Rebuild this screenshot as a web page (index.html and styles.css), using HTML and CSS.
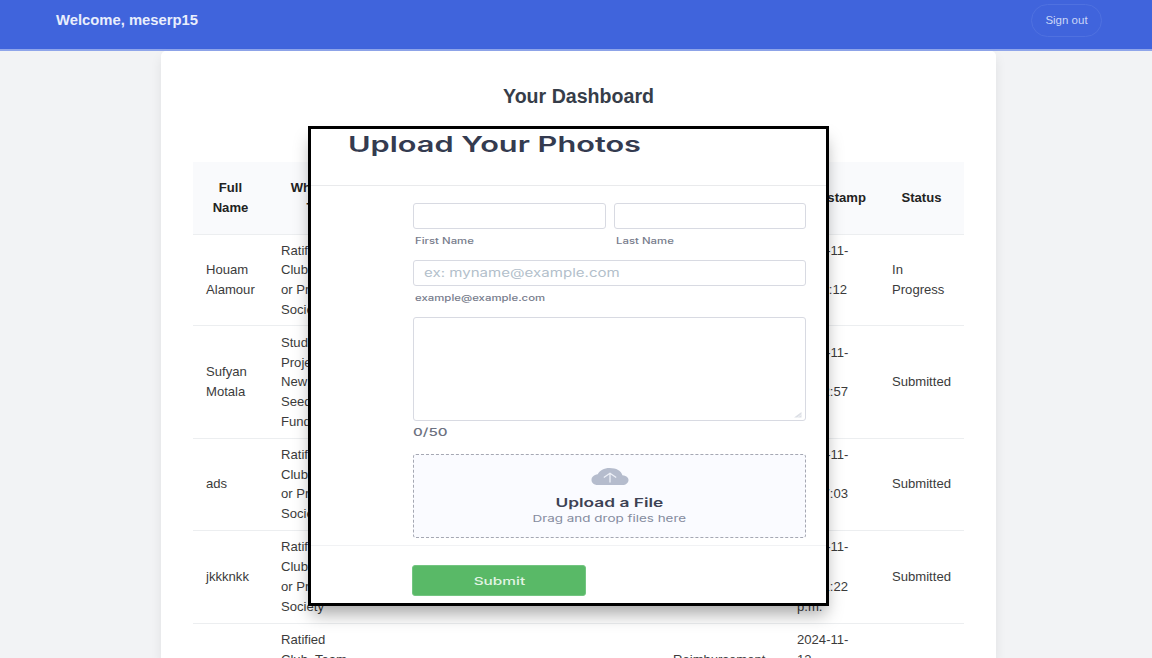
FILE: index.html
```html
<!DOCTYPE html>
<html lang="en">
<head>
<meta charset="utf-8">
<title>Your Dashboard</title>
<link rel="stylesheet" href="styles.css">
</head>
<body>
<header class="topbar">
  <span class="welcome">Welcome, meserp15</span>
  <button class="signout">Sign out</button>
</header>
<main class="card">
  <h1 class="heading">Your Dashboard</h1>
  <div class="table">
    <div class="row head"><div>Full<br>Name</div><div>What is<br>To</div><div></div><div></div><div>Timestamp</div><div>Status</div></div>
    <div class="row"><div>Houam Alamour</div><div>Ratified<br>Club<br>or Project<br>Society</div><div></div><div></div><div>2024-11-<br>13<br>11:12:12<br>p.m.</div><div>In Progress</div></div>
    <div class="row mid"><div>Sufyan Motala</div><div>Student<br>Project<br>New<br>Seed<br>Funding</div><div></div><div></div><div>2024-11-<br>13<br>10:42:57<br>p.m.</div><div>Submitted</div></div>
    <div class="row"><div>ads</div><div>Ratified<br>Club<br>or Project<br>Society</div><div></div><div></div><div>2024-11-<br>13<br>10:37:03<br>p.m.</div><div>Submitted</div></div>
    <div class="row tall"><div>jkkknkk</div><div>Ratified<br>Club<br>or Project<br>Society</div><div></div><div></div><div>2024-11-<br>13<br>10:31:22<br>p.m.</div><div>Submitted</div></div>
    <div class="row"><div></div><div>Ratified<br>Club, Team</div><div></div><div class="kind">Reimbursement</div><div>2024-11-<br>13</div><div></div></div>
  </div>
</main>

<form class="modal">
  <div class="modal-head"><h2 class="wide title">Upload Your Photos</h2></div>
  <div class="fields">
    <div class="names">
      <div class="field"><div class="box"></div><label class="wide hint">First Name</label></div>
      <div class="field"><div class="box"></div><label class="wide hint">Last Name</label></div>
    </div>
    <div class="field"><div class="box"><span class="wide placeholder">ex: myname@example.com</span></div><label class="wide hint">example@example.com</label></div>
    <div class="area">
      <svg class="grip" width="8" height="6" viewBox="0 0 8 6"><path d="M0 5.5 7.5 0V5.5Z" fill="#dcdfe5"/><path d="M3.5 5.5 7.5 2.5" stroke="#fff" stroke-width=".6"/></svg>
    </div>
    <div class="count"><span class="wide counter">0/50</span></div>
    <div class="drop">
      <svg class="cloud" width="38" height="17" viewBox="0 0 38 17">
        <path d="M6.5 17C3 17 .5 14.8 .5 12 .5 9 3 6.8 6.7 6.3 8.5 2.5 13 0 18.6 0c6.700 0 11.800 2.800 12.800 7.200C35 7.600 37.500 9.400 37.500 12c0 2.900-2.500 5-6 5Z" fill="#b5bccd"/>
        <path d="M19 14.500V5.500M12.800 9.500 19 5.300l6.200 4.200" fill="none" stroke="#edf0f7" stroke-width="1.300"/>
      </svg>
      <span class="wide drop-title">Upload a File</span>
      <span class="wide drop-text">Drag and drop files here</span>
    </div>
  </div>
  <div class="modal-foot"><button type="button" class="submit"><span class="wide submit-text">Submit</span></button></div>
</form>
</body>
</html>
```
FILE: styles.css
```css
* { box-sizing: border-box; }
html, body { height: 100%; }
body {
  margin: 0;
  overflow: hidden;
  background: #f2f3f5;
  font-family: "Liberation Sans", Arial, sans-serif;
}
.topbar {
  display: flex;
  justify-content: space-between;
  align-items: flex-start;
  height: 51px;
  padding: 4px 50px 0 56px;
  background: #4064dc;
  border-bottom: 2px solid #8fa5ea;
  color: #e9eefc;
}
.welcome { font-size: 14.8px; font-weight: 700; line-height: 33px; }
.signout {
  width: 71px;
  height: 33px;
  padding: 0;
  border: 1px solid #4f71e0;
  border-radius: 17px;
  background: none;
  color: #cbd7f8;
  font: 11.5px/1 "Liberation Sans", Arial, sans-serif;
}
.card {
  width: 835px;
  height: 607px;
  margin-left: 161px;
  padding: 0 32px;
  border-radius: 5px 5px 0 0;
  overflow: hidden;
  background: #fff;
  box-shadow: 0 6px 12px rgba(0, 0, 0, .08);
}
.heading {
  margin: 0;
  padding-top: 33px;
  height: 111px;
  color: #363d49;
  font-size: 19.6px;
  line-height: 24px;
  text-align: center;
}
.table { color: #3b3b3b; font-size: 13.1px; line-height: 19.7px; }
.row {
  display: grid;
  grid-template-columns: 75px 92px 300px 124px 95px 85px;
  align-items: center;
  padding: 6px 0;
  border-bottom: 1px solid #eceef0;
}
.row > div { padding: 0 6px 0 13px; }
.row > .kind { align-self: end; }
.mid { padding: 6.5px 0; }
.tall { padding: 6.8px 0; }
.head {
  height: 72.5px;
  background: #f9fafc;
  color: #222;
  font-weight: 700;
  text-align: center;
}
.head > div { padding: 0; }

.modal {
  position: absolute;
  left: 308px;
  top: 126px;
  width: 521px;
  height: 480px;
  border: 3px solid #000;
  background: #fff;
  box-shadow: 0 11px 16px -3px rgba(0, 0, 0, .34);
  font-family: Inter, sans-serif;
}
/* Expanded letterforms */
.wide {
  display: inline-block;
  white-space: nowrap;
  transform: scaleX(var(--stretch, 1.4));
  transform-origin: left center;
}
.modal-head { height: 57px; padding: 3px 0 0 37px; border-bottom: 1px solid #e9eaec; }
.title { --stretch: 1.462; margin: 0; color: #343b50; font-size: 21px; font-weight: 600; line-height: 25px; }
.fields { height: 360px; padding: 17px 20px 0 102px; border-bottom: 1px solid #f1f2f4; }
.names { display: grid; grid-template-columns: 1fr 1fr; gap: 8px; }
.field { height: 57px; }
.box {
  display: flex;
  align-items: center;
  height: 26px;
  padding-left: 10px;
  border: 1px solid #d8dae2;
  border-radius: 3px;
}
.hint {
  --stretch: 1.34;
  margin-left: 2px;
  color: #777c8c;
  font-size: 8.5px;
  font-weight: 500;
  line-height: 24px;
  vertical-align: top;
}
.placeholder { --stretch: 1.31; color: #b3bfcb; font-size: 11.5px; line-height: 16px; }
.area {
  display: flex;
  align-items: flex-end;
  justify-content: flex-end;
  height: 104px;
  padding: 0 3px 2px 0;
  border: 1px solid #d8dae2;
  border-radius: 3px;
}
.count { height: 33px; line-height: 22px; }
.counter { --stretch: 1.38; color: #6c7180; font-size: 11px; font-weight: 500; line-height: 22px; vertical-align: top; }
.drop {
  display: flex;
  flex-direction: column;
  align-items: center;
  height: 84px;
  padding-top: 13px;
  border: 1px dashed #a5a8b3;
  border-radius: 3px;
  background: #fafbff;
}
.drop .wide, .submit .wide { transform-origin: center; }
.drop-title { --stretch: 1.445; margin-top: 10px; color: #3d4254; font-size: 12px; font-weight: 600; line-height: 16px; }
.drop-text { --stretch: 1.415; color: #858b9e; font-size: 9.5px; line-height: 16px; }
.modal-foot { padding: 19px 0 0 101px; }
.submit {
  display: block;
  width: 174px;
  height: 31px;
  padding: 0 0 2px;
  border: 1px solid #73c581;
  border-radius: 3px;
  background: #59b967;
  color: #e2f4e4;
  font-family: Inter, sans-serif;
}
.submit-text { font-size: 11px; font-weight: 500; }
```
